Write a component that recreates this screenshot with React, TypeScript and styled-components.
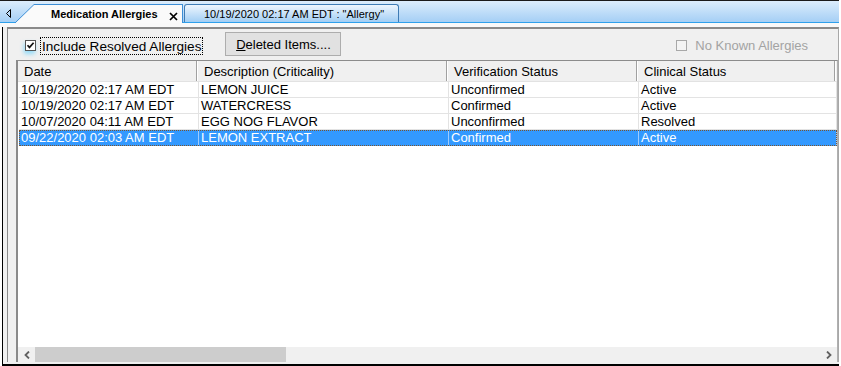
import React from "react";
import styled, { createGlobalStyle } from "styled-components";

interface Allergy {
  date: string;
  description: string;
  verification: string;
  clinical: string;
}

const allergies: Allergy[] = [
  { date: "10/19/2020 02:17 AM EDT", description: "LEMON JUICE", verification: "Unconfirmed", clinical: "Active" },
  { date: "10/19/2020 02:17 AM EDT", description: "WATERCRESS", verification: "Confirmed", clinical: "Active" },
  { date: "10/07/2020 04:11 AM EDT", description: "EGG NOG FLAVOR", verification: "Unconfirmed", clinical: "Resolved" },
  { date: "09/22/2020 02:03 AM EDT", description: "LEMON EXTRACT", verification: "Confirmed", clinical: "Active" },
];

const columns = ["Date", "Description (Criticality)", "Verification Status", "Clinical Status"];
const GRID = "180px 250px 190px 198px";

const GlobalStyle = createGlobalStyle`
  html, body {
    margin: 0;
    padding: 0;
    background: #fff;
  }
  body {
    font-family: "Liberation Sans", Arial, sans-serif;
    font-size: 13px;
    color: #000;
  }
`;

const Window = styled.div`
  width: 839px;
  height: 366px;
  box-sizing: border-box;
  display: flex;
  flex-direction: column;
  border-top: 1px solid #1a1a1a;
`;

const TabStrip = styled.div`
  height: 21px;
  display: flex;
  align-items: flex-end;
  background: linear-gradient(#dcedfc, #a5cff5);
  border-bottom: 1px solid #2ea0ec;
`;

const ScrollLeft = styled.div`
  width: 15px;
  height: 21px;
  align-self: stretch;
  flex-shrink: 0;
`;

const ActiveTab = styled.div`
  display: flex;
  height: 19px;
  margin-bottom: -1px;
`;

const TabFace = styled.div`
  display: flex;
  align-items: center;
  box-sizing: border-box;
  width: 149px;
  height: 19px;
  padding-left: 17px;
  background: #fafafa;
  border-top: 1px solid #3c8ed6;
  border-right: 1px solid #3c8ed6;
  font-size: 11px;
  font-weight: bold;
  white-space: nowrap;
`;

const CloseIcon = styled.svg`
  margin-left: 11px;
  margin-top: 4px;
`;

const Tab = styled.div`
  display: flex;
  align-items: center;
  box-sizing: border-box;
  width: 215px;
  height: 18px;
  margin-left: 1px;
  padding-left: 19px;
  border: 1px solid #3f7cb5;
  border-bottom: none;
  border-radius: 3px 3px 0 0;
  background: linear-gradient(#eef6fe, #a2cef4);
  font-size: 11px;
  white-space: nowrap;
`;

const TabBase = styled.div`
  height: 4px;
  background: #f9f9f9;
`;

const Body = styled.div`
  flex: 1;
  display: flex;
  margin-left: 2px;
  padding: 0 1px 2px 4px;
  background: #f0f0f0;
  border-left: 1px solid #000;
  border-bottom: 2px solid #000;
  min-height: 0;
`;

const Panel = styled.div`
  flex: 1;
  display: flex;
  flex-direction: column;
  border-top: 2px solid #8a8a8a;
  border-left: 1px solid #8a8a8a;
  border-right: 1px solid #a8a8a8;
  min-height: 0;
`;

const Toolbar = styled.div`
  height: 31px;
  flex-shrink: 0;
  display: flex;
  align-items: center;
  padding-left: 17px;
  padding-right: 29px;
`;

const CheckBox = styled.svg<{ $focus?: boolean }>`
  flex-shrink: 0;
  margin-top: 2px;
  ${({ $focus }) => $focus && "filter: drop-shadow(-1px 3px 2px rgba(70, 200, 255, 0.55));"}
`;

const CheckLabel = styled.span<{ $disabled?: boolean; $focus?: boolean }>`
  margin-left: ${({ $focus }) => ($focus ? "5px" : "7px")};
  padding: 1px 1px 0;
  font-size: ${({ $focus }) => ($focus ? "13.6px" : "13px")};
  color: ${({ $disabled }) => ($disabled ? "#a3a3a3" : "#000")};
  outline: ${({ $focus }) => ($focus ? "1px dotted #000" : "none")};
  margin-top: ${({ $focus }) => ($focus ? "3px" : "1px")};
  white-space: nowrap;
`;

const Button = styled.button`
  margin-left: 23px;
  width: 116px;
  height: 24px;
  padding: 0;
  border: 1px solid #adadad;
  background: #e1e1e1;
  font-family: "Liberation Sans", Arial, sans-serif;
  font-size: 13px;
  color: #000;
  margin-bottom: 1px;
`;

const RightGroup = styled.div`
  margin-left: auto;
  display: flex;
  align-items: center;
`;

const List = styled.div`
  flex: 1;
  display: flex;
  flex-direction: column;
  margin-left: 8px;
  background: #fff;
  border-top: 1px solid #8c8c8c;
  border-left: 2px solid #8a8a8a;
  border-right: 1px solid #b0b0b0;
  min-height: 0;
`;

const HeaderRow = styled.div`
  display: grid;
  grid-template-columns: ${GRID};
  height: 21px;
  box-sizing: border-box;
  background: #f0f0f0;
  border-bottom: 1px solid #e2e2e2;
  flex-shrink: 0;
`;

const HeaderCell = styled.div`
  display: flex;
  align-items: center;
  padding-left: 6px;
  border-right: 1px solid #fff;
  box-shadow: inset -1px 0 #a0a0a0;
  white-space: nowrap;
`;

const Rows = styled.div`
  flex: 1;
  padding-left: 1px;
`;

const Row = styled.div<{ $selected?: boolean }>`
  display: grid;
  grid-template-columns: ${GRID};
  height: 16px;
  background: ${({ $selected }) => ($selected ? "#3399ff" : "#fff")};
  color: ${({ $selected }) => ($selected ? "#fff" : "#000")};
  outline: ${({ $selected }) => ($selected ? "1px dotted #7a5530" : "none")};
  outline-offset: -1px;
`;

const Cell = styled.div<{ $selected?: boolean }>`
  box-sizing: border-box;
  padding-left: 2px;
  line-height: 15px;
  border-right: 1px solid ${({ $selected }) => ($selected ? "#9ccbff" : "#e3e3e3")};
  border-bottom: 1px solid ${({ $selected }) => ($selected ? "transparent" : "#e3e3e3")};
  white-space: nowrap;
  overflow: hidden;
`;

const HScroll = styled.div`
  height: 15px;
  display: flex;
  background: #f0f0f0;
  flex-shrink: 0;
`;

const ScrollArrow = styled.div`
  width: 17px;
  display: flex;
  align-items: center;
  justify-content: center;
`;

const Thumb = styled.div`
  width: 251px;
  background: #cdcdcd;
`;

const Track = styled.div`
  flex: 1;
`;

const Check: React.FC<{ checked?: boolean; disabled?: boolean; focus?: boolean }> = ({
  checked,
  disabled,
  focus,
}) => (
  <CheckBox width="11" height="11" viewBox="0 0 11 11" $focus={focus}>
    <rect x="0.5" y="0.5" width="10" height="10" fill={disabled ? "#f4f4f4" : "#fff"} stroke={disabled ? "#a8a8a8" : "#555"} />
    {checked && <path d="M2.5 5.2 L4.5 7.4 L8.6 2.8" fill="none" stroke="#111" strokeWidth="1.7" />}
  </CheckBox>
);

const App: React.FC = () => {
  return (
    <>
      <GlobalStyle />
      <Window>
        <TabStrip>
          <ScrollLeft>
            <svg width="15" height="21" viewBox="0 0 15 21">
              <polygon points="10.5,8.5 6.5,12.5 10.5,16.5" fill="none" stroke="#000" />
            </svg>
          </ScrollLeft>
          <ActiveTab>
            <svg width="19" height="19" viewBox="0 0 19 19">
              <polygon points="0,19 19,0.5 19,19" fill="#fafafa" />
              <line x1="0" y1="19" x2="19" y2="0.5" stroke="#3c8ed6" />
            </svg>
            <TabFace>
              Medication Allergies
              <CloseIcon width="9" height="9" viewBox="0 0 9 9">
                <path d="M1 1 L8 8 M8 1 L1 8" stroke="#000" strokeWidth="1.7" />
              </CloseIcon>
            </TabFace>
          </ActiveTab>
          <Tab>10/19/2020 02:17 AM EDT : "Allergy"</Tab>
        </TabStrip>
        <TabBase />
        <Body>
          <Panel>
            <Toolbar>
              <Check checked focus />
              <CheckLabel $focus>Include Resolved Allergies</CheckLabel>
              <Button>
                <u>D</u>eleted Items....
              </Button>
              <RightGroup>
                <Check disabled />
                <CheckLabel $disabled>No Known Allergies</CheckLabel>
              </RightGroup>
            </Toolbar>
            <List>
              <HeaderRow>
                {columns.map((c) => (
                  <HeaderCell key={c}>{c}</HeaderCell>
                ))}
              </HeaderRow>
              <Rows>
                {allergies.map((a, i) => {
                  const selected = i === allergies.length - 1;
                  return (
                    <Row key={i} $selected={selected}>
                      <Cell $selected={selected}>{a.date}</Cell>
                      <Cell $selected={selected}>{a.description}</Cell>
                      <Cell $selected={selected}>{a.verification}</Cell>
                      <Cell $selected={selected}>{a.clinical}</Cell>
                    </Row>
                  );
                })}
              </Rows>
              <HScroll>
                <ScrollArrow>
                  <svg width="6" height="8" viewBox="0 0 6 8">
                    <path d="M5 0.5 L1.5 4 L5 7.5" fill="none" stroke="#606060" strokeWidth="1.8" />
                  </svg>
                </ScrollArrow>
                <Thumb />
                <Track />
                <ScrollArrow>
                  <svg width="6" height="8" viewBox="0 0 6 8">
                    <path d="M1 0.5 L4.5 4 L1 7.5" fill="none" stroke="#606060" strokeWidth="1.8" />
                  </svg>
                </ScrollArrow>
              </HScroll>
            </List>
          </Panel>
        </Body>
      </Window>
    </>
  );
};

export default App;
